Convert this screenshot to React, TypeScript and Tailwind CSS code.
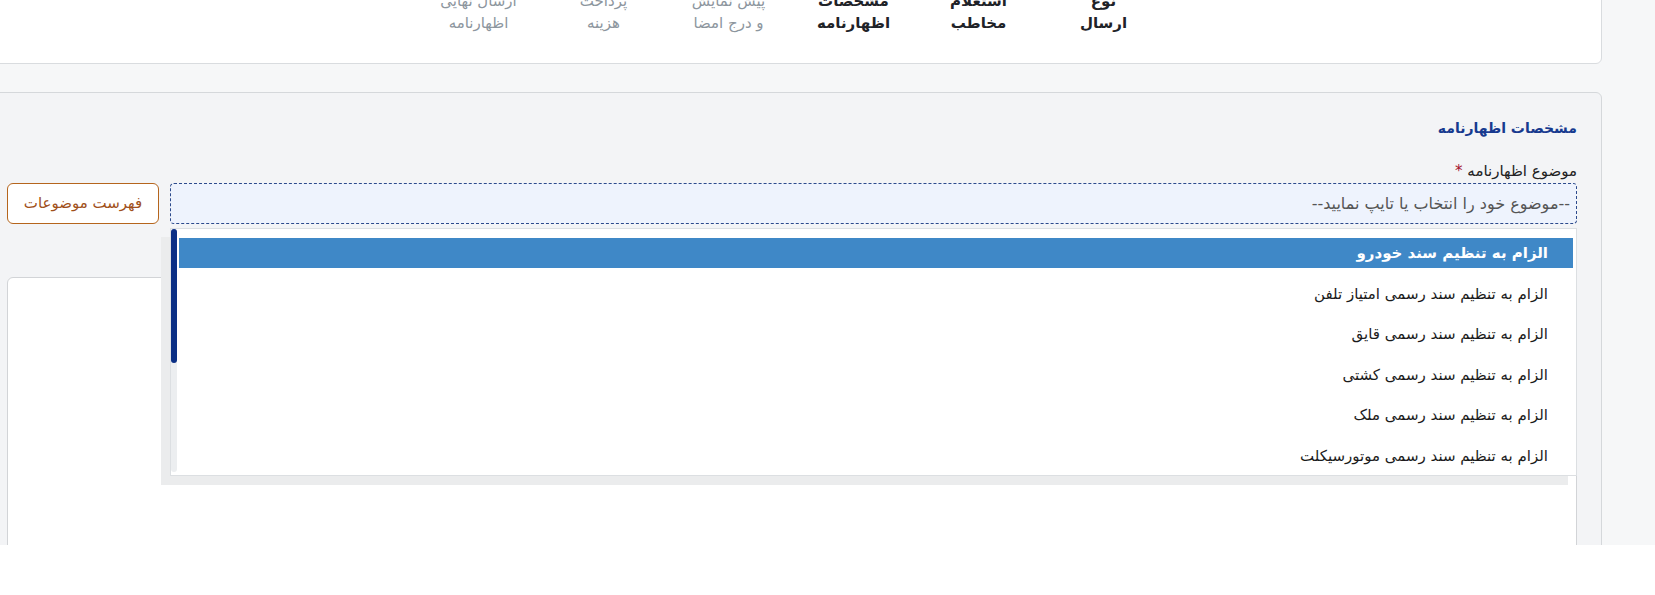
const steps = [
  { top: "نوع", bottom: "ارسال", done: true },
  { top: "استعلام", bottom: "مخاطب", done: true },
  { top: "مشخصات", bottom: "اظهارنامه", done: true },
  { top: "پیش نمایش", bottom: "و درج امضا", done: false },
  { top: "پرداخت", bottom: "هزینه", done: false },
  { top: "ارسال نهایی", bottom: "اظهارنامه", done: false },
];

const subjects = [
  "الزام به تنظیم سند خودرو",
  "الزام به تنظیم سند رسمی امتیاز تلفن",
  "الزام به تنظیم سند رسمی قایق",
  "الزام به تنظیم سند رسمی کشتی",
  "الزام به تنظیم سند رسمی ملک",
  "الزام به تنظیم سند رسمی موتورسیکلت",
];

function Stepper() {
  return (
    <div className="-mt-[11px] -ml-[20px] bg-white border border-[#d9dcdf] rounded-b-[6px] pb-[29px]">
      <div className="flex justify-center">
        {steps.map((s, i) => (
          <div
            key={i}
            className={
              "w-[125px] text-center text-[15px] leading-[22px] " +
              (s.done ? "font-bold text-[#1f2328]" : "text-[#8d969e]")
            }
          >
            <div>{s.top}</div>
            <div>{s.bottom}</div>
          </div>
        ))}
      </div>
    </div>
  );
}

function SubjectDropdown() {
  return (
    <div className="absolute left-0 right-0 top-[calc(100%+4px)] h-[248px] bg-white border border-[#dcdfe2] shadow-[-9px_9px_0_#ebeced] z-10">
      {/* scrollbar */}
      <div className="absolute left-0 top-0 bottom-[3px] w-[6px] bg-[#eceef0] rounded-full">
        <div className="h-[134px] w-[6px] rounded-full bg-[#0b2f85]" />
      </div>
      <ul className="flex flex-col gap-[10.6px] pt-[9px] pl-[8px] pr-[3px]">
        {subjects.map((s, i) => (
          <li
            key={s}
            className={
              "h-[30px] leading-[30px] pr-[25px] text-[15px] " +
              (i === 0 ? "bg-[#3f88c7] text-white font-bold" : "text-[#1b1b1b]")
            }
          >
            {s}
          </li>
        ))}
      </ul>
    </div>
  );
}

export default function App() {
  return (
    <div
      dir="rtl"
      className="w-[1655px] h-[595px] overflow-hidden bg-white font-['DejaVu_Sans',sans-serif]"
    >
      <div className="h-[545px] overflow-hidden bg-[#f6f7f8] pr-[53px]">
        <Stepper />

        <div className="mt-[28px] -ml-[20px] bg-[#f3f4f6] border border-[#d5d8db] rounded-[6px] pr-[24px] pl-[26px] pt-[23px] h-[600px]">
          <h3 className="text-[14px] leading-[24px] font-bold text-[#173a8f]">
            مشخصات اظهارنامه
          </h3>
          <label className="block mt-[20px] text-[15px] leading-[22px] text-[#222]">
            موضوع اظهارنامه <span className="text-[#a3122e]">*</span>
          </label>

          <div className="mt-[1px] flex items-stretch gap-[11px]">
            <div className="relative flex-1">
              <div className="h-[41px] flex items-center pr-[6px] bg-[#eef3fd] border border-dashed border-[#2c4a8c] rounded-[4px] text-[16px] text-[#555]">
                --موضوع خود را انتخاب یا تایپ نمایید--
              </div>
              <SubjectDropdown />
            </div>
            <button
              type="button"
              className="w-[152px] h-[41px] bg-white border border-[#b5651d] rounded-[6px] text-[15px] text-[#a0501a]"
            >
              فهرست موضوعات
            </button>
          </div>

          <div className="mt-[53px] h-[320px] bg-white border border-[#d2d4d7] rounded-[6px]" />
        </div>
      </div>
    </div>
  );
}
